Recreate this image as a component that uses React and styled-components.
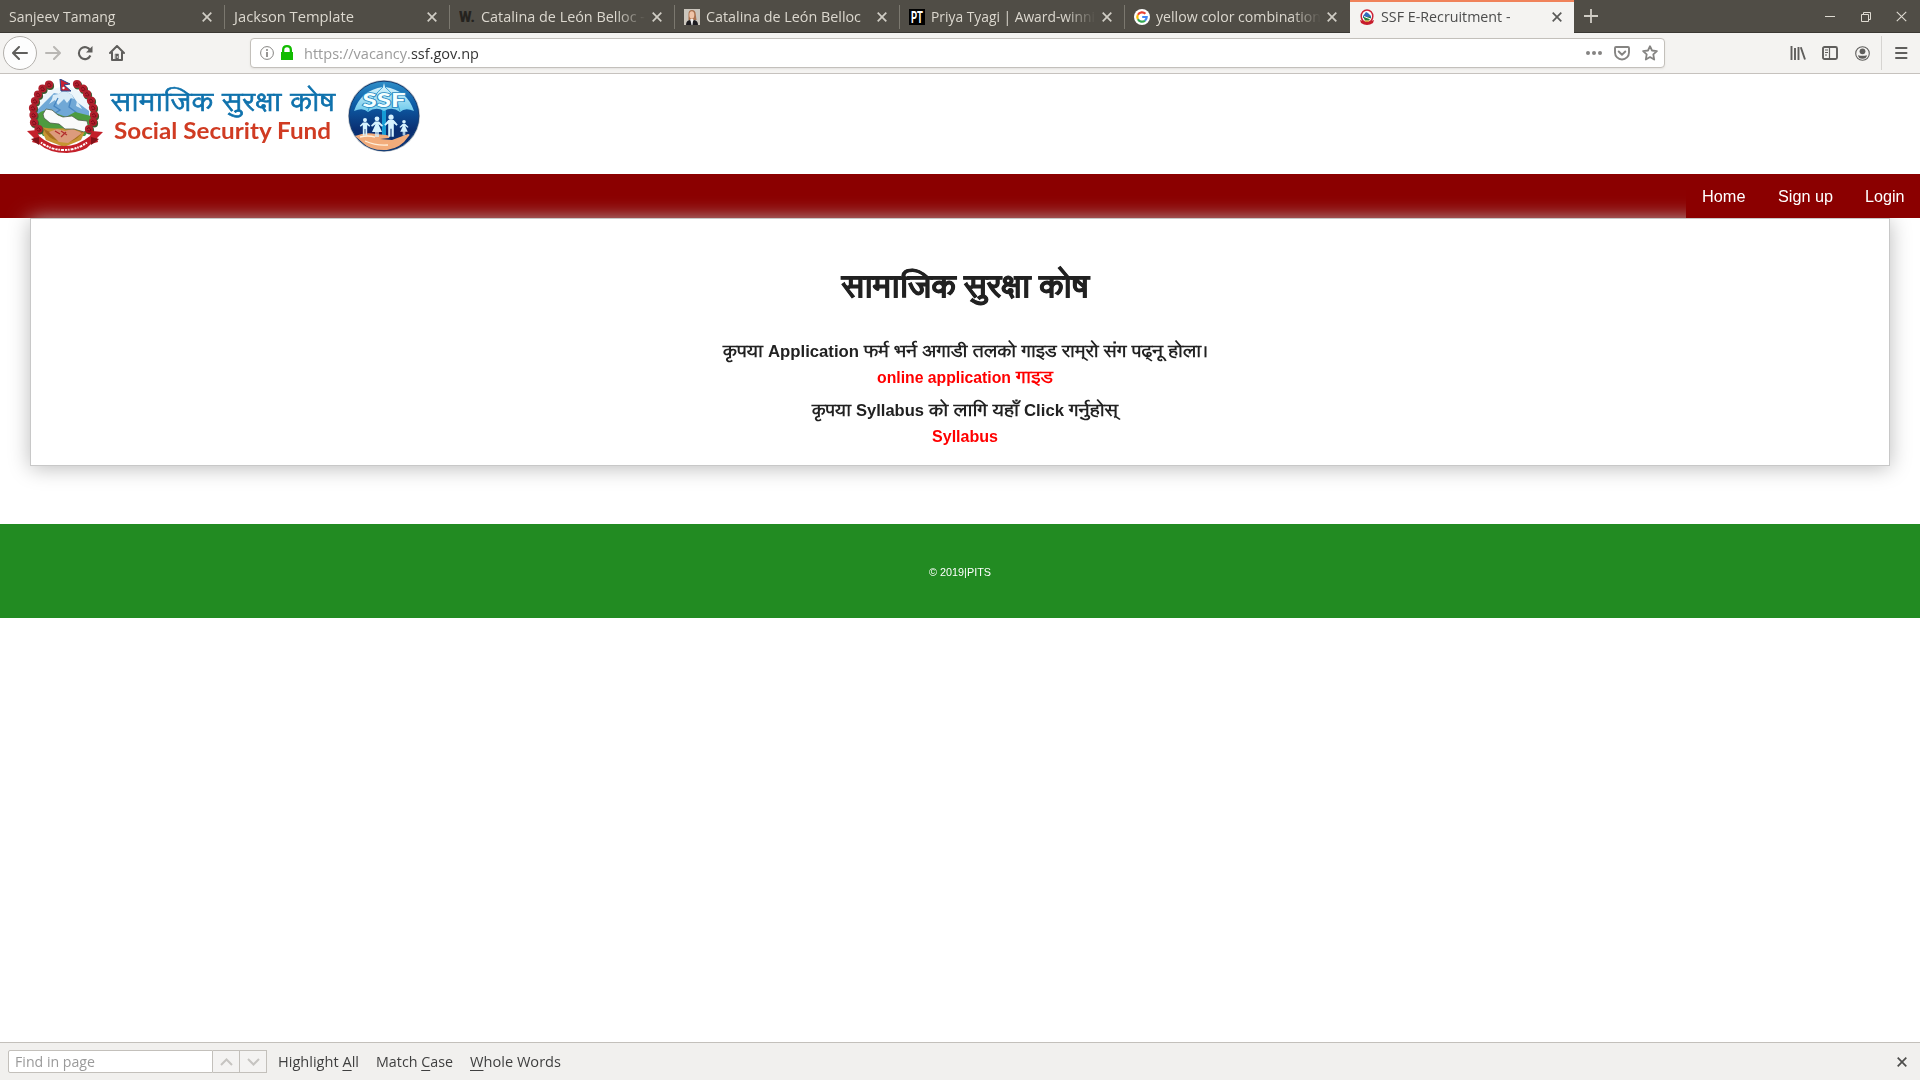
import React, { useLayoutEffect, useRef, useState } from "react";
import styled, { createGlobalStyle } from "styled-components";

const ui = `"Open Sans", "Noto Sans", sans-serif`;
const web = `"Liberation Sans", "Lohit Devanagari", "Noto Sans Devanagari", sans-serif`;

const Global = createGlobalStyle`
  * { box-sizing: border-box; }
  body { margin: 0; background: #fff; overflow: hidden; }
  svg { display: block; flex: none; }
`;

const FitBox = styled.span`
  display: inline-block;
  flex: none;
  white-space: nowrap;
  width: ${(p) => p.$w}px;
`;
const FitText = styled.span`
  display: inline-block;
  transform-origin: 0 50%;
`;

/* Stretches or condenses a run of text to a fixed advance width. */
function Fit({ w, children }) {
  const ref = useRef(null);
  const [scale, setScale] = useState(1);
  useLayoutEffect(() => {
    if (ref.current && ref.current.offsetWidth) {
      setScale(w / parseFloat(getComputedStyle(ref.current).width));
    }
  }, [w]);
  return (
    <FitBox $w={w}>
      <FitText ref={ref} style={{ transform: `scaleX(${scale})` }}>{children}</FitText>
    </FitBox>
  );
}

const Window = styled.div`
  width: 1920px;
  height: 1080px;
  display: flex;
  flex-direction: column;
  background: #fff;
`;

const TabBar = styled.div`
  display: flex;
  flex: none;
  height: 33px;
  background: linear-gradient(#504d46 0, #504d46 32px, #3a3833 32px);
  font: 14.4px/20px ${ui};
  color: #dcd8cf;
`;
const Tab = styled.div`
  width: ${(p) => (p.$active ? 224 : 225)}px;
  height: 33px;
  display: flex;
  align-items: center;
  padding: 0 ${(p) => (p.$active ? 12 : 13)}px ${(p) => (p.$active ? 1 : 0)}px 9px;
  gap: 6px;
  background-color: ${(p) => (p.$active ? "#f4f3f1" : "transparent")};
  color: ${(p) => (p.$active ? "#4c4c4c" : "inherit")};
  border-top: ${(p) => (p.$active ? "2px solid #f0825a" : "0")};
  background-image: ${(p) =>
    p.$line ? "linear-gradient(#7b786f, #7b786f)" : "none"};
  background-size: 1px 24px;
  background-position: right 0 top 5px;
  background-repeat: no-repeat;
`;
const TabTitle = styled.div`
  flex: 1;
  white-space: nowrap;
  height: 20px;
  ${(p) =>
    p.$fade &&
    "mask-image: linear-gradient(to right, #000 calc(100% - 30px), transparent);"}
`;
const NewTab = styled.div`
  width: 33px;
  display: flex;
  align-items: center;
  justify-content: center;
  padding-bottom: 1px;
`;
const WindowControls = styled.div`
  margin-left: auto;
  display: flex;
  align-items: center;
  gap: 24px;
  padding: 0 13px 0 0;
`;

const Toolbar = styled.div`
  flex: none;
  height: 41px;
  display: flex;
  align-items: center;
  background: #f4f3f1;
  border-bottom: 1px solid #c6c2be;
  padding: 0 10px 0 3px;
`;
const BackButton = styled.div`
  width: 34px;
  height: 34px;
  border: 1px solid #b3b0ac;
  border-radius: 50%;
  background: #fdfdfd;
  display: flex;
  align-items: center;
  justify-content: center;
`;
const ToolSlot = styled.div`
  width: 32px;
  display: flex;
  justify-content: center;
`;
const UrlBar = styled.div`
  width: 1415px;
  height: 30px;
  margin-left: 117px;
  border: 1px solid #c3c0bb;
  border-radius: 4px;
  background: #fff;
  display: flex;
  align-items: center;
  padding: 0 6px 0 9px;
  box-shadow: 0 1px 2px #e4e2e0;
`;
const UrlText = styled.div`
  margin-left: 4px;
  flex: 1;
  padding-top: 1px;
  font: 14.4px/20px ${ui};
  color: #9b9b9b;
  b { font-weight: 400; color: #353535; }
`;
const UrlActions = styled.div`
  display: flex;
  align-items: center;
  gap: 12px;
`;
const ToolsRight = styled.div`
  margin-left: auto;
  display: flex;
  align-items: center;
`;
const ToolDivider = styled.div`
  width: 1px;
  height: 34px;
  background: #d6d4d1;
  margin: 0 10px 0 3px;
`;

const Page = styled.div`
  flex: 1;
  font-family: ${web};
`;
const Header = styled.header`
  height: 100px;
  display: flex;
  align-items: flex-start;
  padding: 5px 0 0 27px;
`;
const LogoWords = styled.div`
  width: 224px;
  margin: 0 12px 0 7px;
  display: flex;
  flex-direction: column;
`;
const LogoNepali = styled.div`
  height: 38px;
  padding-top: 12px;
  font: 26px/26px "Lohit Devanagari", "Noto Sans Devanagari", "Noto Sans", sans-serif;
  color: #0f72ad;
  -webkit-text-stroke: 0.7px #0f72ad;
`;
const LogoEnglish = styled.div`
  padding-left: 3px;
  font: 700 23px/27px Lato, sans-serif;
  color: #d03b22;
  height: 27px;
`;
const Nav = styled.nav`
  height: 44px;
  background: #8b0000;
  display: flex;
  justify-content: flex-end;
`;
const NavList = styled.div`
  display: flex;
  position: relative;
  z-index: 2;
  background: #8b0000;
`;
const NavLink = styled.a`
  padding: 13px 16px 11px;
  font-size: 16px;
  line-height: 20px;
  color: #fff;
`;
const Card = styled.section`
  position: relative;
  height: 248px;
  margin: 0 30px;
  border: 1px solid #c8c8c8;
  background: #fff;
  box-shadow: 0 2px 20px #bbb;
  padding-left: 10px;
  display: flex;
  flex-direction: column;
  align-items: center;
  color: #212121;
  font-weight: 700;
`;
const Heading = styled.h1`
  margin: 43px 0 0;
  height: 77px;
  font-size: 30px;
  line-height: 50px;
  font-weight: 700;
  -webkit-text-stroke: 0.8px #212121;
`;
const Note = styled.div`
  display: flex;
  align-items: baseline;
  gap: 5px;
  height: ${(p) => p.$h}px;
  font-size: 16px;
  line-height: 26px;
  color: ${(p) => (p.$link ? "#ff0000" : "inherit")};
`;
const Footer = styled.footer`
  margin-top: 58px;
  height: 94px;
  background: #228b22;
  color: #fff;
  font-size: 11px;
  display: flex;
  align-items: center;
  justify-content: center;
  padding-top: 1px;
`;

const FindBar = styled.div`
  flex: none;
  height: 38px;
  border-top: 1px solid #c3c0bb;
  background: #f1f0ee;
  display: flex;
  align-items: center;
  padding: 0 13px 0 8px;
  font: 14.4px/20px ${ui};
  color: #3f3f3f;
`;
const FindField = styled.div`
  width: 205px;
  height: 23px;
  border: 1px solid #c3c0bb;
  border-radius: 2px 0 0 2px;
  background: #fff;
  color: #9a9a9a;
  padding-left: 6px;
  line-height: 21px;
`;
const FindStep = styled.div`
  width: 27px;
  height: 23px;
  border: 1px solid #c3c0bb;
  border-left: 0;
  display: flex;
  align-items: center;
  justify-content: center;
  background: #f4f3f2;
`;
const FindOption = styled.div`
  margin-left: ${(p) => p.$ml}px;
  u { text-underline-offset: 3px; text-decoration-thickness: 1px; }
`;
const Push = styled.div`
  margin-left: auto;
`;

const Cross = ({ c = "#d0cdc5", s = 10, w = 1.7 }) => (
  <svg width={s} height={s} viewBox="0 0 10 10" fill="none" stroke={c} strokeWidth={w}>
    <path d="M.7.7l8.6 8.6M9.3.7L.7 9.3" />
  </svg>
);

const Rose = ({ x, y, r = 4.1 }) => (
  <g>
    <circle cx={x + 1} cy={y + 1.4} r={r} fill="#3b5a30" />
    <circle cx={x} cy={y} r={r} fill="#b01f2c" />
    <path d={`M${x - 2} ${y}q2-3 3.5 0t-3 1.5`} stroke="#780c19" strokeWidth="1" fill="none" />
  </g>
);
const roses = [
  [22, 5.5], [15.5, 9.5], [11, 15.5], [8, 22], [6, 29], [6.5, 36], [7, 43.5], [11.5, 50],
  [50, 5], [56, 9.5], [60, 15], [64, 21.5], [66, 28.5], [67, 36], [66, 43], [62, 50],
];

const Emblem = () => (
  <svg width="77" height="76" viewBox="0 0 77 76">
    <circle cx="37" cy="37" r="29" fill="#edf6fb" />
    <path d="M8 33l10-10 9-9 5 1 5-4 8 5 5 7 12 9v10H8z" fill="#70a8d6" />
    <path d="M26 16l6-1 5-4 8 5 2 4-3-1-4 5-3-4-6 6-3-5-6 4 3-5zM50 22l5 8-6-3z" fill="#d9ecf8" />
    <path d="M31 19l-4 8 6 4-8 5M44 20l-2 8 8 6" stroke="#4685c0" fill="none" strokeWidth="1.3" />
    <path d="M9 37q6-7 14-5l16 6 9-5 16 4 2 8-8 12H16L8 44z" fill="#4d9b3f" />
    <path d="M13 48q18 3 32 0l14 2-5 11-17 7-18-7z" fill="#c69432" />
    <path d="M16 49q9 7 18 4l-3 9q-10-2-15-13zM57 51q-8 6-17 4l2 8q10-3 15-12z" fill="#a66f20" />
    <path d="M22 53l8-3 8 2 7-2 10 4-8 6-6 4-9-1z" fill="#dc9b7c" />
    <path d="M28 52l5 3M34 52l6 4M39 53l-5 5" stroke="#b22d2d" strokeWidth="1.2" />
    <path d="M19 30l6 1 6 5 5 2 9-1 6 4 9 1 2 8-5 3-10-3-9 0-6-5-9-1-6-5-1-4z" fill="#fafafa" stroke="#4c5d49" strokeWidth=".8" />
    {roses.map(([x, y]) => <Rose key={`${x}-${y}`} x={x} y={y} />)}
    <path d="M33 0l10 5-6 1 7 6H34z" fill="#c82034" stroke="#25498e" strokeWidth="1" />
    <circle cx="36.5" cy="9" r="1.2" fill="#fff" />
    <path d="M0 52l10-1 2 6q11 10 25 10t26-10l2-5 11 1-6 6 1 4-7 2q-6 8-24 9-18 0-28-9l-7-2 2-4z" fill="#c4202a" />
    <path d="M4 60l8-2v8zM72 60l-8-2v8z" fill="#82131a" />
    <path d="M14 63.500q10 7.500 23 7.500t23-7.500" stroke="#fff" strokeWidth="2" strokeDasharray="1.5 1 3 1 2.2 .8" fill="none" />
  </svg>
);

const Person = ({ x, y, s = 1, skirt }) => (
  <g transform={`translate(${x} ${y}) scale(${s})`} fill="#d7f3ff">
    <circle cx="0" cy="-8.2" r="2.4" />
    <path
      d={
        skirt
          ? "M-2-5.5h4l4 4-1 1.2-3.5-2.4L5 5H1.7v5H.3V5h-.6v5h-1.4V5H-5l3.5-7.7L-5-.3l-1-1.2z"
          : "M-2.5-5.5h5l3.7 4-1 1.2-2.6-2V10H.5V2.5h-1V10h-2.1V-2.3l-2.6 2-1-1.2z"
      }
    />
  </g>
);

const FundSeal = () => (
  <svg width="74" height="74" viewBox="0 0 74 74">
    <defs>
      <linearGradient id="seal" x1="0" y1="0" x2="0" y2="1">
        <stop offset="0" stopColor="#2f8fc8" />
        <stop offset=".32" stopColor="#0d5ea8" />
        <stop offset=".7" stopColor="#0a2f72" />
      </linearGradient>
      <linearGradient id="dome" x1="0" y1="0" x2="0" y2="1">
        <stop offset="0" stopColor="#e6f9fe" />
        <stop offset="1" stopColor="#6cc9ec" />
      </linearGradient>
    </defs>
    <circle cx="37" cy="37" r="36" fill="#b6bcc4" />
    <circle cx="37" cy="37" r="34.8" fill="url(#seal)" stroke="#123c73" strokeWidth="1" />
    <path d="M35 22h4v35h-4z" fill="#159bd4" />
    <path d="M37 4l1 4q22 3 29 24-9-4-14 1-8-6-16-1-8-5-16 1-5-5-14-1Q14 11 36 8z" fill="url(#dome)" />
    <path d="M36 8Q25 17 21 32M38 8q11 9 15 24" stroke="#2b9bd0" strokeWidth=".9" fill="none" />
    <text x="37" y="28" textAnchor="middle" textLength="43" lengthAdjust="spacingAndGlyphs" fontFamily="Lato, sans-serif" fontWeight="900" fontSize="18" fill="#f4ffff" stroke="#2488c0" strokeWidth="1.6" paintOrder="stroke">SSF</text>
    <path d="M8 57q10-4 21-2l10 1q5 1 3 3l-9 1 12 1 16-6q3 0 0 3Q54 69 40 71 24 72 16 64z" fill="#f2ac7b" />
    <path d="M18 62q11 5 23 4M13 58q8-2 15 0" stroke="#fff0dc" strokeWidth="1.3" fill="none" />
    <Person x={18} y={48} s={0.84} />
    <Person x={30} y={48} s={1} skirt />
    <Person x={44} y={47} s={1.08} />
    <Person x={57} y={49} s={0.75} skirt />
  </svg>
);

const Wordmark = () => (
  <svg width="16" height="16" viewBox="0 0 16 16">
    <text x="0" y="13" fontFamily="Roboto, sans-serif" fontWeight="900" fontSize="14" fill="#25231f" textLength="16" lengthAdjust="spacingAndGlyphs">W.</text>
  </svg>
);
const Portrait = () => (
  <svg width="16" height="16" viewBox="0 0 16 16">
    <path fill="#cbc6bd" d="M0 0h16v16H0z" />
    <path fill="#a9714e" d="M4.500 11V5q0-4 3.500-4t3.700 4l.8 6z" />
    <ellipse cx="7.800" cy="6" rx="2.500" ry="3.700" fill="#f0c4a7" />
    <path fill="#1d1c20" d="M2 16q0-4.500 4-5l2 2 2-2q4 .5 4 5z" />
    <path fill="#eee" d="M6.300 10h3L8.500 16h-1z" />
  </svg>
);
const PtIcon = () => (
  <svg width="16" height="16" viewBox="0 0 16 16">
    <path d="M0 0h16v16H0z" />
    <text x="2" y="14" fontFamily="Roboto, sans-serif" fontWeight="700" fontSize="16.500" fill="#fff" textLength="12" lengthAdjust="spacingAndGlyphs">PT</text>
  </svg>
);
const GoogleIcon = () => (
  <svg width="16" height="16" viewBox="0 0 16 16" fill="none" strokeWidth="2.200">
    <circle cx="8" cy="8" r="8" fill="#fff" />
    <path d="M11.400 4.800A4.700 4.700 0 0 0 3.900 5.700" stroke="#ea4335" />
    <path d="M3.900 5.700a4.700 4.700 0 0 0 0 4.600" stroke="#fbbc05" />
    <path d="M3.900 10.300A4.700 4.700 0 0 0 11 11.600" stroke="#34a853" />
    <path d="M11 11.600A4.700 4.700 0 0 0 12.700 8H8.200" stroke="#4285f4" />
  </svg>
);
const MiniEmblem = () => (
  <svg width="16" height="16" viewBox="0 0 16 16">
    <ellipse cx="8" cy="7.200" rx="5.800" ry="6.300" fill="#fff" stroke="#cc2336" strokeWidth="1.500" />
    <path d="M4 7l3-4 2 1 3 3v2H4z" fill="#346dbb" />
    <path d="M4 7.500l4 1 2-1 2 1-2 3H6z" fill="#27823b" />
    <path d="M5 7.500l3 1.200 3 1" stroke="#fff" strokeWidth="1" />
    <path d="M1 11l3 1q4 2 8 0l3-1-1 3q-6 4-12 0z" fill="#c71d2c" />
    <path d="M5 11.500h6l-2 1.500H7z" fill="#d99a38" />
  </svg>
);

const tabs = [
  { title: "Sanjeev Tamang", w: 106.5 },
  { title: "Jackson Template", w: 120 },
  { title: "Catalina de León Belloc -", w: 164, icon: <Wordmark />, fade: true },
  { title: "Catalina de León Belloc", w: 155, icon: <Portrait /> },
  { title: "Priya Tyagi | Award-winni", w: 164, icon: <PtIcon />, fade: true },
  { title: "yellow color combination", w: 165, icon: <GoogleIcon />, fade: true },
  { title: "SSF E-Recruitment -", w: 129.5, icon: <MiniEmblem />, active: true },
];

const ink = "#5f5e5c";

export default function App() {
  return (
    <>
      <Global />
      <Window>
        <TabBar>
          {tabs.map((t, i) => (
            <Tab key={i} $active={t.active} $line={i < 5}>
              {t.icon}
              <TabTitle $fade={t.fade}><Fit w={t.w}>{t.title}</Fit></TabTitle>
              <Cross c={t.active ? "#5a5a58" : undefined} />
            </Tab>
          ))}
          <NewTab>
            <svg width="14" height="14" viewBox="0 0 14 14" stroke="#d0cdc5" strokeWidth="1.8"><path d="M7 0v14M0 7h14" /></svg>
          </NewTab>
          <WindowControls>
            <svg width="12" height="12" viewBox="0 0 12 12" stroke="#dfdbd2" strokeWidth="1"><path d="M1 5.500h10" /></svg>
            <svg width="12" height="12" viewBox="0 0 12 12" stroke="#dfdbd2" fill="none"><path d="M1.500 3.500h7v7h-7zM3.500 3.500v-2h7v7h-2" /></svg>
            <Cross s={11} w={1} c="#dfdbd2" />
          </WindowControls>
        </TabBar>

        <Toolbar>
          <BackButton>
            <svg width="16" height="14" viewBox="0 0 16 14" fill="none" stroke={ink} strokeWidth="2" strokeLinecap="round" strokeLinejoin="round"><path d="M7 1L1 7l6 6M1.500 7H15" /></svg>
          </BackButton>
          <ToolSlot>
            <svg width="16" height="14" viewBox="0 0 16 14" fill="none" stroke="#b9b7b4" strokeWidth="2" strokeLinecap="round" strokeLinejoin="round"><path d="M9 1l6 6-6 6M14.500 7H1" /></svg>
          </ToolSlot>
          <ToolSlot>
            <svg width="16" height="16" viewBox="0 0 16 16" fill="none" stroke={ink} strokeWidth="2.100"><path d="M13.300 5.500A6 6 0 1 0 13.400 10.500" /><path d="M15.500 1v6.500H9z" fill={ink} stroke="none" /></svg>
          </ToolSlot>
          <ToolSlot>
            <svg width="16" height="16" viewBox="0 0 16 16" fill="none" stroke={ink} strokeWidth="2" strokeLinejoin="round" strokeLinecap="round"><path d="M1 8l7-7 7 7M3 7.500V15h10V7.500" /><path d="M6.500 9h3v6h-3z" fill={ink} strokeWidth=".5" /><path d="M8.300 11.500v1" stroke="#fff" strokeWidth=".8" /></svg>
          </ToolSlot>
          <UrlBar>
            <svg width="14" height="14" viewBox="0 0 14 14" fill="none" stroke="#858482" strokeWidth="1"><circle cx="7" cy="7" r="6.400" /><path d="M7 6v5" strokeWidth="1.700" /><circle cx="7" cy="4" r=".6" fill="#858482" /></svg>
            <svg width="26" height="16" viewBox="-7 0 26 16"><path d="M0 7h1V5q0-5 5-5t5 5v2h1v8H0zM3.300 7h5.400V5q0-2.800-2.700-2.800T3.300 5z" fill="#12bc00" /></svg>
            <UrlText><Fit w={175}>https://vacancy.<b>ssf.gov.np</b></Fit></UrlText>
            <UrlActions>
              <svg width="16" height="16" viewBox="0 0 16 16" fill="#858482"><circle cx="2" cy="8" r="2" /><circle cx="8" cy="8" r="2" /><circle cx="14" cy="8" r="2" /></svg>
              <svg width="16" height="16" viewBox="0 0 16 16" fill="none" stroke="#858482" strokeWidth="1.900" strokeLinecap="round" strokeLinejoin="round"><path d="M2 2h12q1 0 1 1v4.500a7 7 0 0 1-14 0V3q0-1 1-1z" /><path d="M4.700 6.500L8 9.700l3.300-3.200" /></svg>
              <svg width="16" height="16" viewBox="0 0 16 16" fill="none" stroke="#858482" strokeWidth="1.800" strokeLinejoin="round"><path d="M8 1.200l2 4.300 4.900.6-3.600 3.300.9 5.200L8 12.100l-4.200 2.500.9-5.200L1.100 6.100 6 5.500z" /></svg>
            </UrlActions>
          </UrlBar>
          <ToolsRight>
            <ToolSlot><svg width="16" height="14" viewBox="0 0 16 14" fill="none" stroke={ink} strokeWidth="1.900"><path d="M1.500 0v14M5 2v12M8.500 1v13M10.800 1.200L15 13.500" /></svg></ToolSlot>
            <ToolSlot><svg width="16" height="14" viewBox="0 0 16 14" fill="none" stroke={ink} strokeWidth="1.900"><rect x="1" y="1" width="14" height="12" rx="1.500" /><path d="M7.500 1v12" strokeWidth="1.200" /><path d="M3 4h3M3 6.500h3M3 9h2" strokeWidth="1" /></svg></ToolSlot>
            <ToolSlot><svg width="15" height="15" viewBox="0 0 15 15" fill="none" stroke={ink}><circle cx="7.500" cy="7.500" r="6.800" strokeWidth="1.100" /><circle cx="7.500" cy="5.300" r="2.900" fill={ink} stroke="none" /><path d="M3 9.200q4.500 1.300 9 0-.5 3.600-4.500 3.600T3 9.200z" fill={ink} stroke="none" /></svg></ToolSlot>
            <ToolDivider />
            <svg width="18" height="14" viewBox="-1.500 0 18 14" stroke={ink} strokeWidth="2" strokeLinecap="round"><path d="M2.500 2h10.500M2.500 7h10.500M2.500 12h10.500" /></svg>
          </ToolsRight>
        </Toolbar>

        <Page>
          <Header>
            <Emblem />
            <LogoWords>
              <LogoNepali><Fit w={224}>सामाजिक सुरक्षा कोष</Fit></LogoNepali>
              <LogoEnglish><Fit w={217}>Social Security Fund</Fit></LogoEnglish>
            </LogoWords>
            <FundSeal />
          </Header>
          <Nav>
            <NavList>
              <NavLink><Fit w={43.5}>Home</Fit></NavLink>
              <NavLink><Fit w={55}>Sign up</Fit></NavLink>
              <NavLink><Fit w={39.5}>Login</Fit></NavLink>
            </NavList>
          </Nav>
          <Card>
            <Heading><Fit w={247}>सामाजिक सुरक्षा कोष</Fit></Heading>
            <Note $h={26}>
              <Fit w={40}>कृपया</Fit>
              <Fit w={91}>Application</Fit>
              <Fit w={344}>फर्म भर्न अगाडी तलको गाइड राम्‌रो संग पढ्नू होला।</Fit>
            </Note>
            <Note $h={33} $link>
              <Fit w={134}>online application</Fit>
              <Fit w={37}>गाइड</Fit>
            </Note>
            <Note $h={26}>
              <Fit w={39}>कृपया</Fit>
              <Fit w={68}>Syllabus</Fit>
              <Fit w={90}>को लागि यहाँ</Fit>
              <Fit w={40}>Click</Fit>
              <Fit w={49}>गर्नुहोस्</Fit>
            </Note>
            <Note $h={26} $link><Fit w={66}>Syllabus</Fit></Note>
          </Card>
          <Footer><Fit w={62}>© 2019|PITS</Fit></Footer>
        </Page>

        <FindBar>
          <FindField><Fit w={80}>Find in page</Fit></FindField>
          <FindStep><svg width="13" height="8" viewBox="0 0 13 8" fill="none" stroke="#c6c4c1" strokeWidth="2"><path d="M1 7l5.500-5.500L12 7" /></svg></FindStep>
          <FindStep><svg width="13" height="8" viewBox="0 0 13 8" fill="none" stroke="#c6c4c1" strokeWidth="2"><path d="M1 1l5.500 5.500L12 1" /></svg></FindStep>
          <FindOption $ml={11}><Fit w={81}>Highlight <u>A</u>ll</Fit></FindOption>
          <FindOption $ml={17}><Fit w={77}>Match <u>C</u>ase</Fit></FindOption>
          <FindOption $ml={17}><Fit w={91}><u>W</u>hole Words</Fit></FindOption>
          <Push><Cross c="#4d4d4b" /></Push>
        </FindBar>
      </Window>
    </>
  );
}
